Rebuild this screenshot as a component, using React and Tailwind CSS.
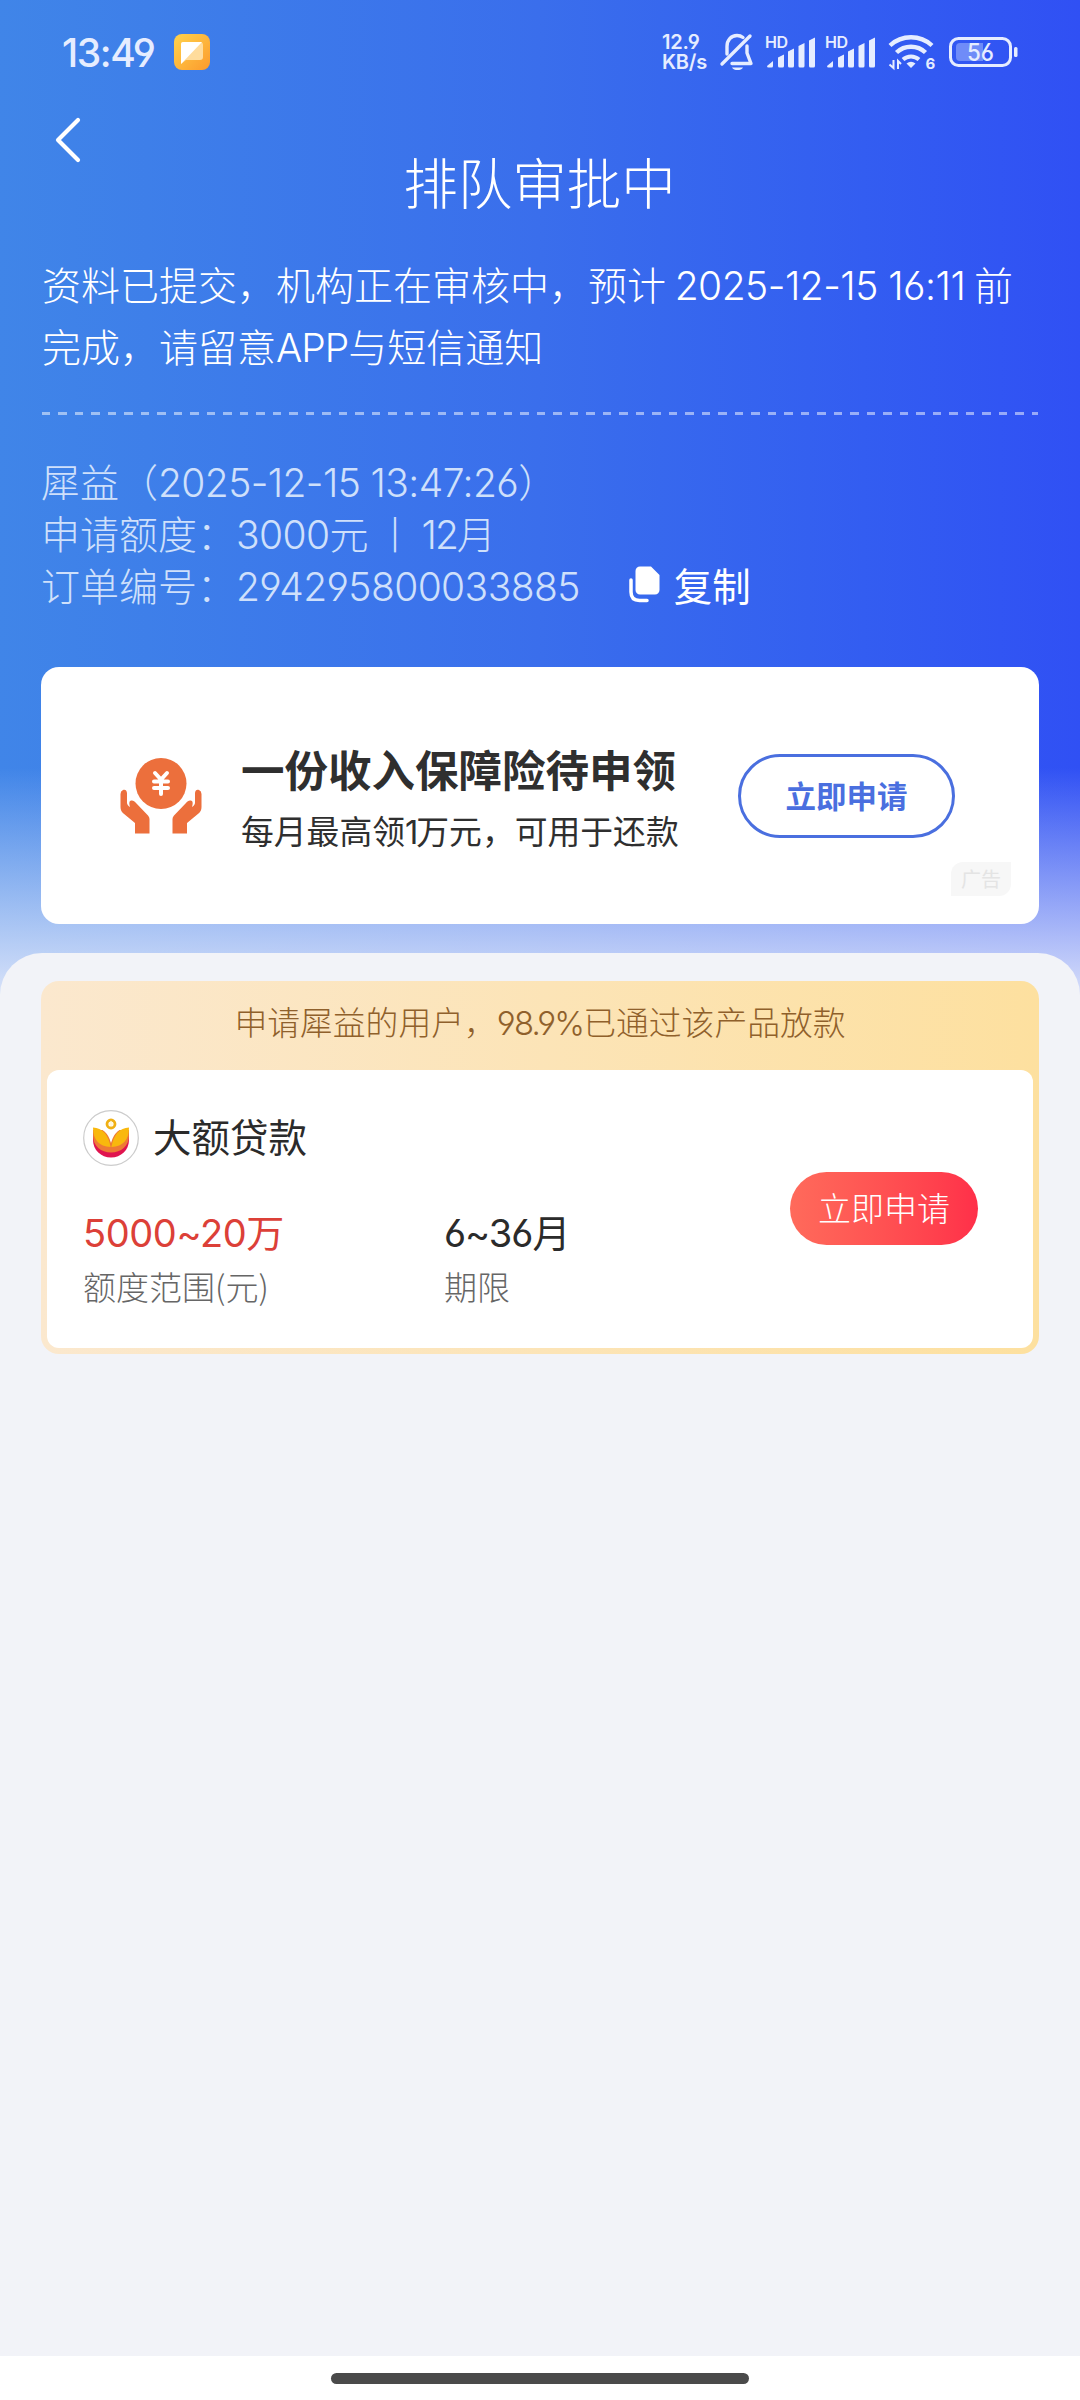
import React from 'react';
import clsx from 'clsx';

const details = [
  { label: '犀益（', value: '2025-12-15 13:47:26', suffix: '）' },
  { label: '申请额度：', value: '3000', suffix: '元', value2: '12', suffix2: '月' },
  { label: '订单编号：', value: '294295800033885' }
];

// Digits and latin letters use their own face inside the Chinese text
const Num = ({ children, className }) => (
  <span className={clsx("font-['Inter'] leading-none [font-feature-settings:'cv03','cv04']", className)}>{children}</span>
);

const NoteIcon = () => (
  <svg width="36" height="36" viewBox="0 0 36 36" className="ml-[23px]">
    <defs>
      <linearGradient id="note" x1="0" y1="0" x2="1" y2="1">
        <stop offset="0" stopColor="#ffd34d" />
        <stop offset="1" stopColor="#fc9a2c" />
      </linearGradient>
    </defs>
    <rect width="36" height="36" rx="8" fill="url(#note)" />
    <path d="M10 8H26a3 3 0 0 1 3 3V23a3 3 0 0 1-3 3H12L7 30V11a3 3 0 0 1 3-3Z" fill="#ffdc9c" />
    <path d="M9 8H28L7 30V10a2 2 0 0 1 2-2Z" fill="#fff" />
  </svg>
);

const BellOffIcon = () => (
  <svg width="36" height="38" viewBox="0 0 36 38" fill="none" stroke="#e6edff" strokeWidth="3.4" strokeLinecap="round" strokeLinejoin="round">
    <path d="M31 3L3 31" />
    <path d="M8 21V13.5C8 7 12 2.5 18 2.5C20.5 2.5 22.5 3.3 24 4.5" />
    <path d="M28 13V20L32 30.5H13" />
    <path d="M13 34.5H24C23 36.5 21 37 18.5 37S14 36.5 13 34.5Z" fill="#e6edff" stroke="none" />
  </svg>
);

const SignalIcon = () => (
  <svg width="52" height="42" viewBox="0 -4 52 42" fill="#e6edff">
    <text x="0" y="12.500" fontFamily="Inter" fontWeight="600" fontSize="16" textLength="23">HD</text>
    <path d="M2 31L8 26V31a1.500 1.500 0 0 1-1.500 1.500H3.500A1.500 1.500 0 0 1 2 31Z" />
    <path d="M13 22.500L19 19.500V31a1.500 1.500 0 0 1-1.500 1.500H14.500A1.500 1.500 0 0 1 13 31Z" />
    <path d="M23 16.500L29 13.500V31a1.500 1.500 0 0 1-1.500 1.500H24.500A1.500 1.500 0 0 1 23 31Z" />
    <path d="M33.500 11L39.500 8V31a1.500 1.500 0 0 1-1.500 1.500H35A1.500 1.500 0 0 1 33.500 31Z" />
    <path d="M44 5.500L50 2.500V31a1.500 1.500 0 0 1-1.500 1.500H45.500A1.500 1.500 0 0 1 44 31Z" />
  </svg>
);

const WifiIcon = () => (
  <svg width="48" height="44" viewBox="0 -4 48 44" fill="none" stroke="#e6edff">
    <path d="M2 11.500A31 31 0 0 1 44 11.500" strokeWidth="4.400" />
    <path d="M8.500 18.500A21 21 0 0 1 37.500 18.500" strokeWidth="4.400" />
    <path d="M15 25.500A12 12 0 0 1 31 25.500" strokeWidth="4" />
    <path d="M18.500 29.500Q23 26 27.500 29.500L23 34Z" fill="#e6edff" stroke="none" />
    <path d="M5.500 26V34L1.500 30.500M10 35V27L13 30" strokeWidth="2" />
    <text x="37.500" y="34.500" fontFamily="Inter" fontWeight="700" fontSize="15" fill="#e6edff" stroke="none">6</text>
  </svg>
);

const BatteryIcon = () => (
  <svg width="70" height="30" viewBox="0 0 70 30">
    <rect x="1.500" y="1.500" width="60" height="27" rx="8" fill="none" stroke="#e6edff" strokeWidth="3" />
    <path d="M11 6H34V24H11a4 4 0 0 1-4-4V10a4 4 0 0 1 4-4Z" fill="#6f8cf8" />
    <rect x="65" y="10" width="3.500" height="10" rx="1.500" fill="#e6edff" />
    <text x="18" y="23.500" fontFamily="Inter" fontWeight="500" fontSize="24" textLength="27" lengthAdjust="spacingAndGlyphs" fill="#e6edff" className="[font-feature-settings:'cv03','cv04']">56</text>
  </svg>
);

const CopyIcon = () => (
  <svg width="31" height="37" viewBox="0 0 31 37">
    <path d="M11 0.500H22L30.500 9V24a4.500 4.500 0 0 1-4.500 4.500H11A4.500 4.500 0 0 1 6.500 24V5A4.500 4.500 0 0 1 11 0.500Z" fill="#fff" />
    <path d="M2 14V26Q2 34.500 10.500 34.500H18" fill="none" stroke="#fff" strokeWidth="3.500" strokeLinecap="round" />
  </svg>
);

const HandsIcon = () => (
  <svg width="82" height="76" viewBox="0 0 82 76" fill="#ec6f3c">
    <circle cx="41" cy="25.500" r="25.500" />
    <g fill="none" stroke="#fff" strokeWidth="4" strokeLinecap="round">
      <path d="M35 15L41 21.500L47 15M41 22V36M34 23.500H48M34 30H48" />
    </g>
    <path id="hand" d="M3 32C5.500 31 7 33 7 35.500V45C7 46.500 8.500 48 10 49C9 46 9 43.500 10.500 42.800C12.500 42 14.500 43 16 45L28 57.500Q29.500 59 29.500 61V75.500H15V65L3.500 55.500Q0.500 53 0.500 49V36Q0.500 33 3 32Z" />
    <use href="#hand" transform="matrix(-1 0 0 1 82 0)" />
  </svg>
);

const LotusLogo = () => (
  <svg width="56" height="56" viewBox="0 0 56 56">
    <circle cx="28" cy="28" r="27.300" fill="#fff" stroke="#ccc" strokeWidth="1.200" />
    <path d="M10 23V30C10 40 18 47.500 28 47.500S46 40 46 30V23Z" fill="#e0144f" />
    <path d="M10 20V26C10 36 18 42.500 28 42.500S46 36 46 26V20Z" fill="#ee7a35" />
    <path d="M10 17Q24 18 28 33Q32 18 46 17Z" fill="#fff" />
    <path d="M10 17.500Q24 18 27.600 37Q10 36 10 17.500ZM46 17.500Q32 18 28.400 37Q46 36 46 17.500Z" fill="#f9b80d" />
    <circle cx="28" cy="14" r="4" fill="#fff" stroke="#f0b013" strokeWidth="2.800" />
    <path d="M28 10.500L30 14A2 2 0 1 1 26 14Z" fill="#fff8d8" />
  </svg>
);

export default function App() {
  return (
    <div className="flex h-[2400px] w-[1080px] flex-col overflow-hidden bg-[#f2f3f8] font-['Noto_Sans_CJK_SC',sans-serif]">
      {/* Blue header with fade out into the sheet */}
      <header className="bg-linear-to-r from-[#4085e8] via-[#3a6eec] to-[#3050f4]">
        <div className="h-[1010px] bg-linear-to-b from-transparent from-[76%] to-[#e2e8fa] to-100%">
          {/* Status bar */}
          <div className="flex h-[104px] items-center pl-[62px] pr-[61px]">
            <Num className="w-[89px] whitespace-nowrap text-[39px] font-medium tracking-[-1.400px] text-[#e6edff]">13:49</Num>
            <NoteIcon />
            <div className="ml-auto flex items-center">
              <Num className="w-[57px] text-[20px]/[19px] font-semibold tracking-[-0.200px] text-[#e6edff]">12.9<br />KB/s</Num>
              <BellOffIcon />
              <div className="ml-[10px] flex gap-2">
                <SignalIcon />
                <SignalIcon />
              </div>
              <div className="ml-[11px] flex items-center gap-[13px]">
                <WifiIcon />
                <BatteryIcon />
              </div>
            </div>
          </div>

          {/* Title */}
          <div className="h-[148px] pl-[55px] pt-[13px]">
            <svg width="26" height="46" viewBox="0 0 26 46" fill="none" stroke="#fff" strokeWidth="4.200" strokeLinecap="round" strokeLinejoin="round">
              <path d="M23 3L3 23L23 43" />
            </svg>
            <h1 className="-mt-[22px] pr-[56px] text-center text-[54.500px]/[80px] font-light text-white">排队审批中</h1>
          </div>

          <p className="h-[124px] whitespace-nowrap px-[42px] text-[39px]/[62px] font-light text-white">
            资料已提交，机构正在审核中，预计 <Num className="tracking-[-0.500px]">2025-12-15 16:11</Num> 前<br />
            完成，请留意<Num className="tracking-[-1px]">APP</Num>与短信通知
          </p>

          <div className="mx-[42px] mt-[36px] h-[3px] bg-[repeating-linear-gradient(90deg,#ffffff80_0_8.500px,transparent_8.500px_16.500px)]" />

          {/* Order details */}
          <div className="mt-[39px] px-[42px] text-[39px]/[52px] font-light text-[#cfe0fb]">
            {details.map((row, index) => (
              <div key={index} className="flex h-[52px] items-center whitespace-nowrap">
                <span className="-ml-px">
                  {row.label}
                  <Num className="tracking-[-0.600px]">{row.value}</Num>
                  {row.suffix}
                  {row.value2 && (
                    <>
                      <span className="mx-[7px]">丨</span>
                      <Num className="tracking-[-2px]">{row.value2}</Num>
                    </>
                  )}
                  {row.suffix2}
                </span>
                {index === 2 && (
                  <button className="ml-[49px] flex items-center gap-[14px] text-[38.500px] font-normal text-white">
                    <CopyIcon />
                    复制
                  </button>
                )}
              </div>
            ))}
          </div>

          {/* Insurance banner */}
          <div className="relative mx-[41px] mt-[57px] flex h-[257px] items-center rounded-[18px] bg-white pl-[79px]">
            <HandsIcon />
            <div className="ml-[39px] mt-[6px] w-[497px] whitespace-nowrap text-[#2f2f2f]">
              <div className="text-[43.500px]/[62px] font-bold">一份收入保障险待申领</div>
              <div className="text-[32.800px]/[60px]">每月最高领<Num className="tracking-[-2px]">1</Num>万元，可用于还款</div>
            </div>
            <button className="h-[84px] w-[217px] rounded-full border-[3.500px] border-[#4a6fdf] text-[30.500px] font-bold text-[#4a6fdf]">立即申请</button>
            <div className="absolute bottom-[28px] right-[28px] flex h-[34px] w-[60px] items-center justify-center rounded-br-[12px] rounded-tl-[12px] bg-[#f7f7f7] text-[20px] text-[#e4e4e4]">广告</div>
          </div>
        </div>
      </header>

      {/* Sheet */}
      <main className="z-10 -mt-[57px] flex-1 rounded-t-[42px] bg-[#f2f3f8] px-[41px] pt-[28px]">
        <section className="h-[373px] rounded-[18px] bg-linear-to-r from-[#fbe8ce] to-[#fde09f] px-[6px] pb-[6px]">
          <div className="h-[89px] text-center text-[32.800px]/[79px] font-light text-[#8f602b]">
            申请犀益的用户，<Num className="tracking-[-1.800px]">98.9%</Num>已通过该产品放款
          </div>
          <div className="flex h-[278px] items-center justify-between rounded-[12px] bg-white pl-[36px] pr-[55px]">
            <div className="h-full pt-[40px] text-[#2b2b2b]">
              <div className="flex h-[56px] items-center gap-[14px] text-[38.500px]">
                <LotusLogo />
                <span className="pb-[4px]">大额贷款</span>
              </div>
              <div className="mt-[35px] grid grid-cols-[361px_auto] whitespace-nowrap text-[38px]/[60px]">
                <div className="text-[#dc4038]"><Num className="tracking-[-0.400px]">5000~20</Num>万</div>
                <div><Num className="tracking-[-1px]">6~36</Num>月</div>
                <div className="text-[33px]/[50px] font-light text-[#666]">额度范围(元)</div>
                <div className="text-[33px]/[50px] font-light text-[#666]">期限</div>
              </div>
            </div>
            <button className="mb-[2px] h-[73px] w-[188px] rounded-full bg-linear-to-r from-[#ff6a5b] to-[#ff2f49] text-[33px] font-light text-white">立即申请</button>
          </div>
        </section>
      </main>

      {/* Gesture bar */}
      <footer className="flex h-[44px] justify-center bg-white pt-[17px]">
        <div className="h-[11px] w-[418px] rounded-full bg-[#4a4a4a]" />
      </footer>
    </div>
  );
}
